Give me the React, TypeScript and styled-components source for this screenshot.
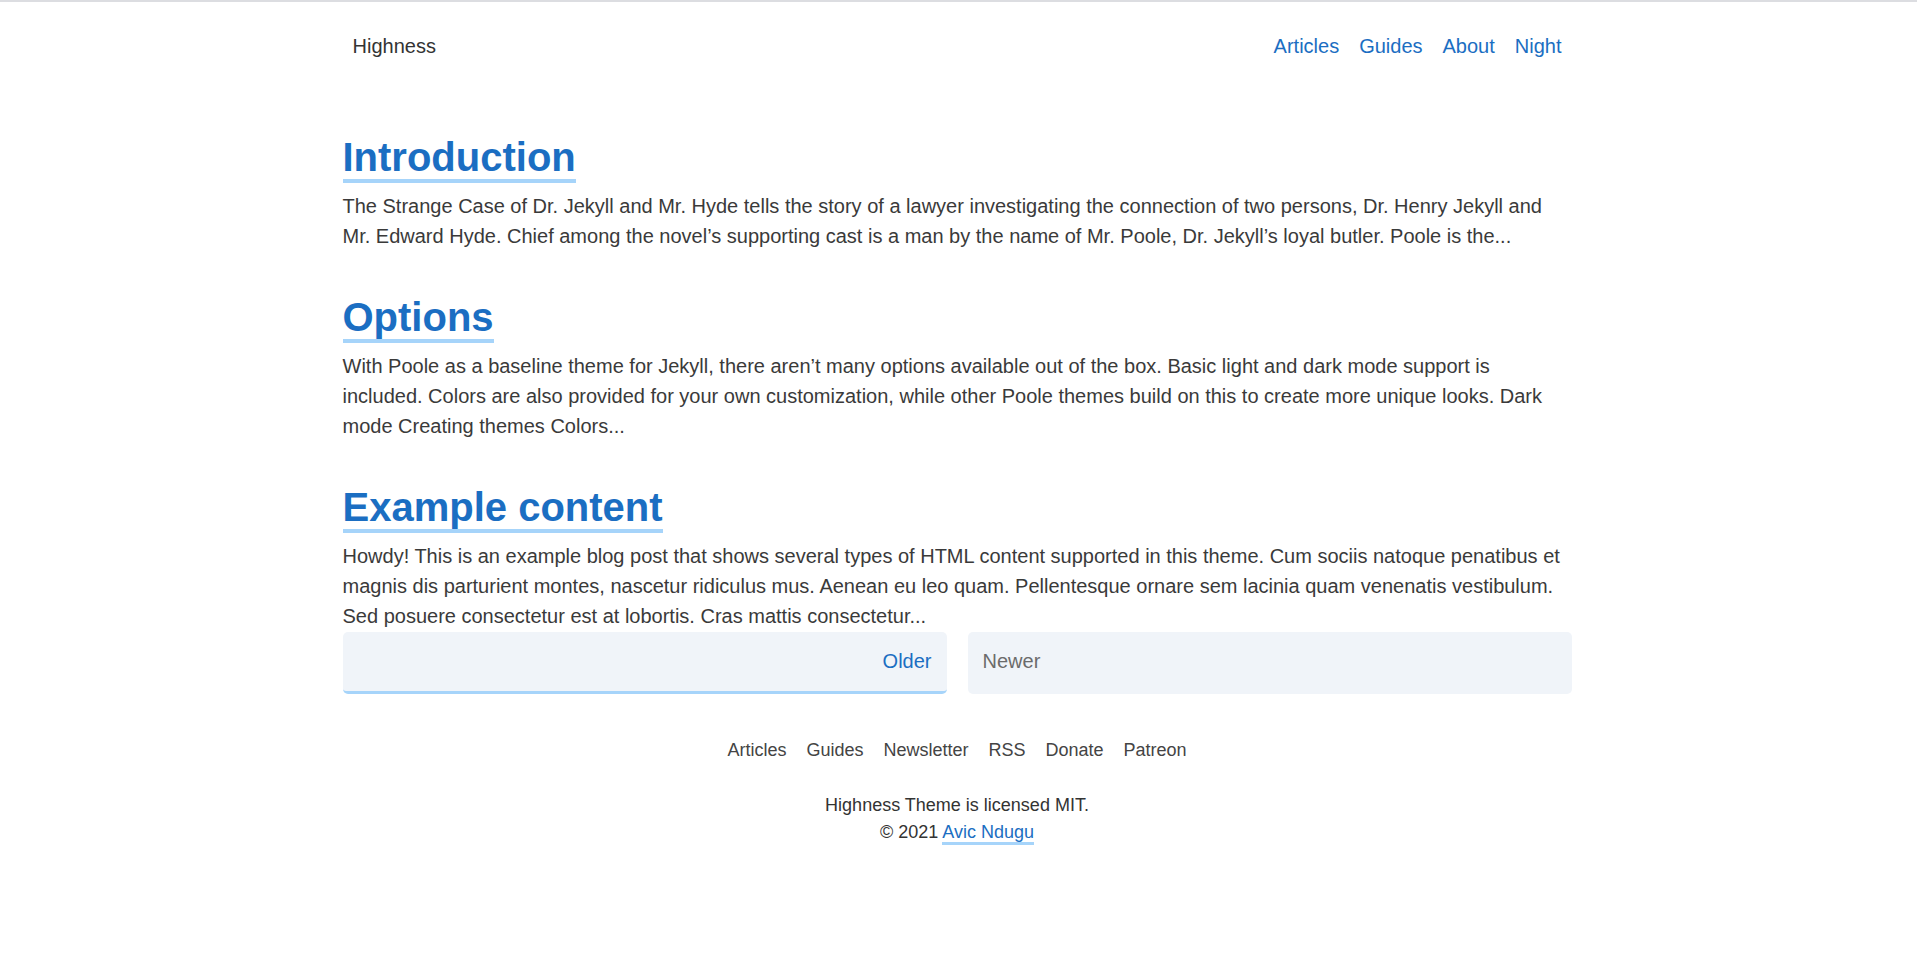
import React from 'react'
import styled, { createGlobalStyle } from 'styled-components';

const GlobalStyle = createGlobalStyle`
    html, body {
        margin: 0;
        padding: 0;
        background: #fff;
    }
    body {
        font-family: "Liberation Sans", Arial, sans-serif;
        color: #333;
        border-top: 2px solid #dcdde1;
    }
`;

const posts = [
    {
        title: 'Introduction',
        excerpt: 'The Strange Case of Dr. Jekyll and Mr. Hyde tells the story of a lawyer investigating the connection of two persons, Dr. Henry Jekyll and Mr. Edward Hyde. Chief among the novel’s supporting cast is a man by the name of Mr. Poole, Dr. Jekyll’s loyal butler. Poole is the...',
    },
    {
        title: 'Options',
        excerpt: 'With Poole as a baseline theme for Jekyll, there aren’t many options available out of the box. Basic light and dark mode support is included. Colors are also provided for your own customization, while other Poole themes build on this to create more unique looks. Dark mode Creating themes Colors...',
    },
    {
        title: 'Example content',
        excerpt: 'Howdy! This is an example blog post that shows several types of HTML content supported in this theme. Cum sociis natoque penatibus et magnis dis parturient montes, nascetur ridiculus mus. Aenean eu leo quam. Pellentesque ornare sem lacinia quam venenatis vestibulum. Sed posuere consectetur est at lobortis. Cras mattis consectetur...',
    },
];

const footerLinks = ['Articles', 'Guides', 'Newsletter', 'RSS', 'Donate', 'Patreon'];

const App = () => {
    return (
        <>
            <GlobalStyle />
            <Container>
                <Masthead>
                    <SiteTitle href="#">Highness</SiteTitle>
                    <Nav>
                        <NavLink href="#">Articles</NavLink>
                        <NavLink href="#">Guides</NavLink>
                        <NavLink href="#">About</NavLink>
                        <NavLink href="#">Night</NavLink>
                    </Nav>
                </Masthead>

                <Main>
                    {posts.map((post) => (
                        <Post key={post.title}>
                            <PostTitle>
                                <TitleLink href="#">{post.title}</TitleLink>
                            </PostTitle>
                            <Excerpt>{post.excerpt}</Excerpt>
                        </Post>
                    ))}

                    <Pager>
                        <PagerItem href="#" $active $align="right">Older</PagerItem>
                        <PagerItem as="span" $align="left">Newer</PagerItem>
                    </Pager>
                </Main>

                <Footer>
                    <FooterNav>
                        {footerLinks.map((l) => (
                            <FooterLink key={l} href="#">{l}</FooterLink>
                        ))}
                    </FooterNav>
                    <FooterText>
                        Highness Theme is licensed MIT.
                        <br />
                        © 2021 <UnderLink href="#">Avic Ndugu</UnderLink>
                    </FooterText>
                </Footer>
            </Container>
        </>
    )
}

const Container = styled.div`
    width: 1229px;
    padding-right: 3px;
    margin: 0 auto;
`;

const Masthead = styled.header`
    height: 88px;
    display: flex;
    align-items: center;
    justify-content: space-between;
    padding: 0 10px;
`;

const SiteTitle = styled.a`
    font-size: 20px;
    color: #333;
    text-decoration: none;
`;

const Nav = styled.nav`
    display: flex;
    margin-right: -10px;
`;

const NavLink = styled.a`
    font-size: 20px;
    color: #1b6ec2;
    text-decoration: none;
    padding: 0 10px;
`;

const Main = styled.main`
    padding-top: 42px;
`;

const Post = styled.article`
    & + & {
        margin-top: 41px;
    }
`;

const PostTitle = styled.h2`
    margin: 0 0 9px;
    font-size: 40px;
    line-height: 50px;
    font-weight: 700;
`;

const TitleLink = styled.a`
    color: #1b6ec2;
    text-decoration: none;
    border-bottom: 4px solid #a6d4fa;
`;

const Excerpt = styled.p`
    margin: 0;
    font-size: 20px;
    line-height: 30px;
    color: #3a3a3a;
`;

const Pager = styled.nav`
    display: grid;
    grid-template-columns: 1fr 1fr;
    gap: 21px;
    margin-top: 1px;
`;

const PagerItem = styled.a<{ $active?: boolean; $align: 'left' | 'right' }>`
    display: flex;
    align-items: center;
    justify-content: ${(p) => (p.$align === 'right' ? 'flex-end' : 'flex-start')};
    height: 62px;
    box-sizing: border-box;
    padding: 0 15px;
    border-radius: 5px;
    background: #f0f4f9;
    font-size: 20px;
    text-decoration: none;
    color: ${(p) => (p.$active ? '#1b6ec2' : '#6b6b6b')};
    border-bottom: 3px solid ${(p) => (p.$active ? '#a6d4fa' : 'transparent')};
`;

const Footer = styled.footer`
    padding: 43px 0 80px;
    text-align: center;
    font-size: 18px;
    line-height: 27px;
`;

const FooterNav = styled.nav`
    display: flex;
    justify-content: center;
    gap: 20px;
`;

const FooterLink = styled.a`
    color: #444;
    text-decoration: none;
`;

const FooterText = styled.p`
    margin: 28px 0 0;
    color: #333;
`;

const UnderLink = styled.a`
    color: #1b6ec2;
    text-decoration: none;
    border-bottom: 3px solid #a6d4fa;
`;

export default App;
